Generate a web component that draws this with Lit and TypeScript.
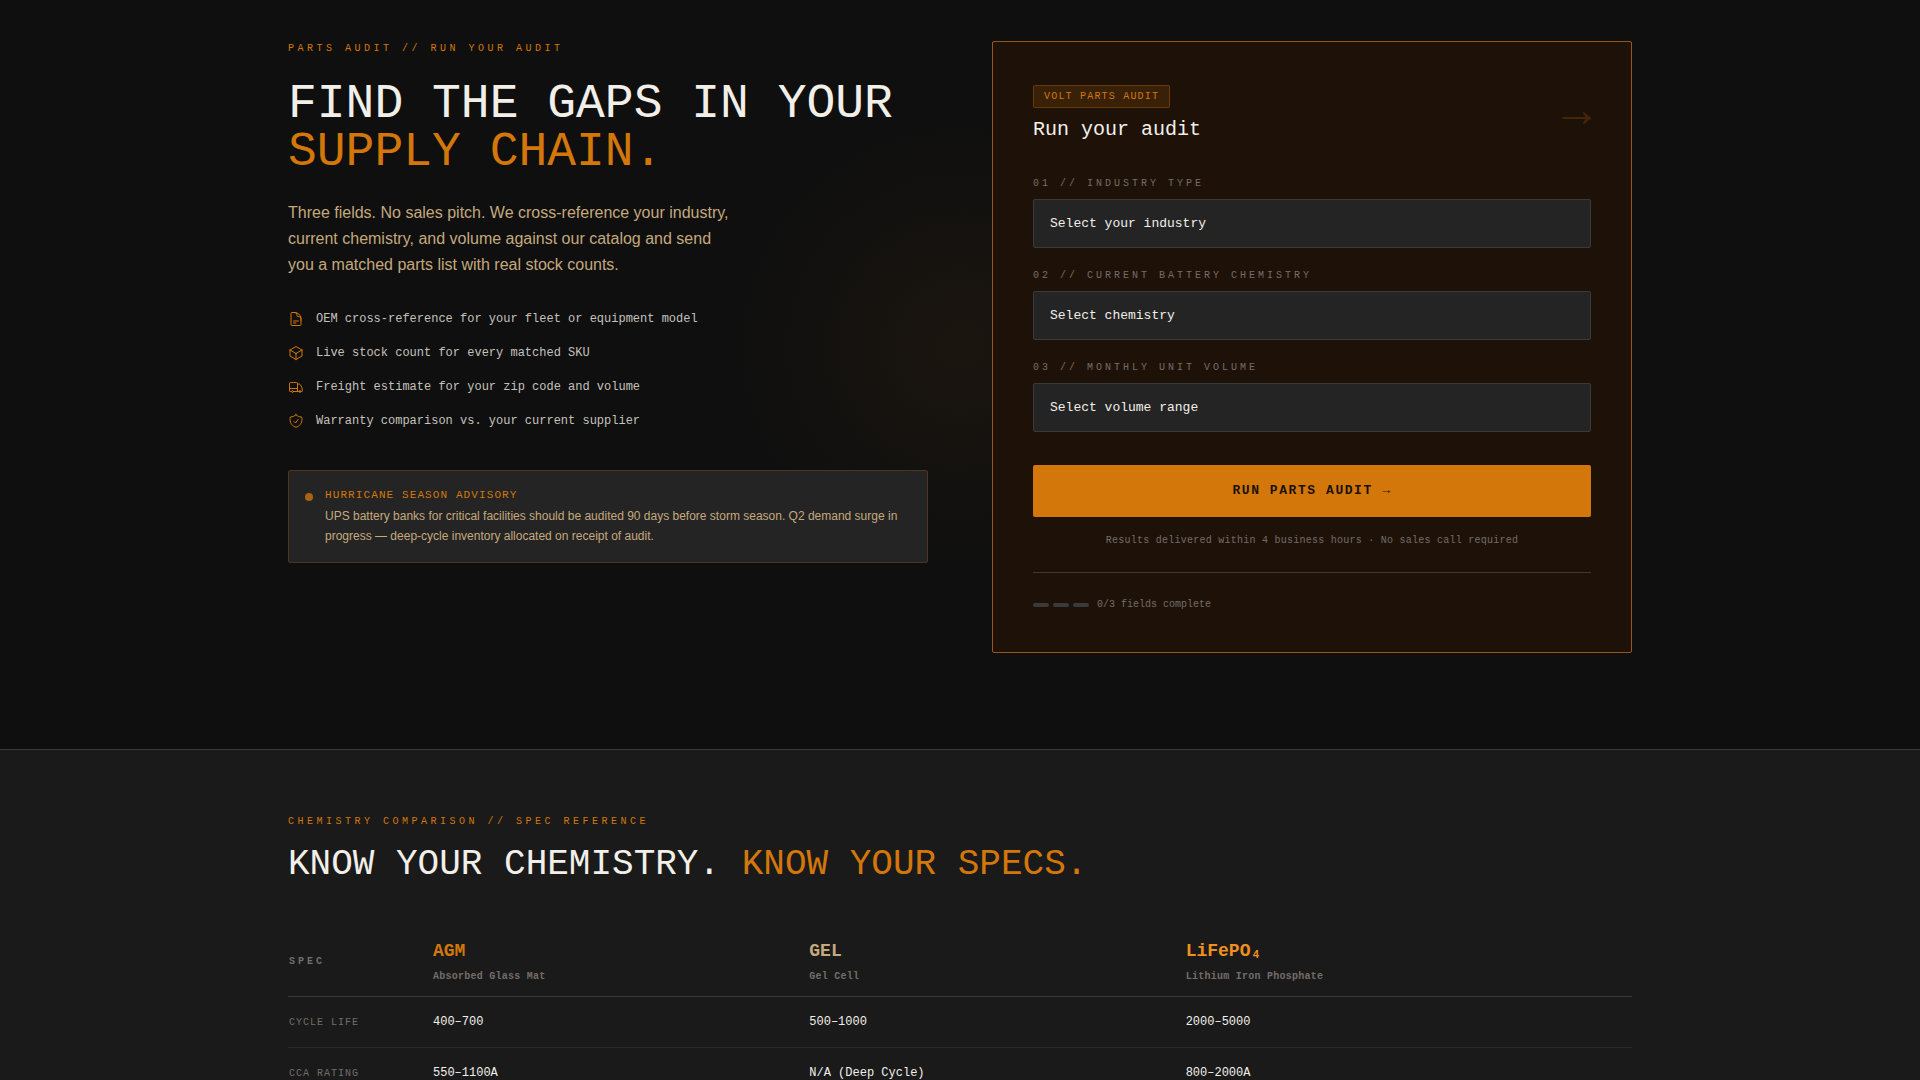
import { LitElement, html, css, svg } from "lit";
import { customElement, state } from "lit/decorators.js";

const ICONS = {
  document:
    "M19.5 14.25v-2.625a3.375 3.375 0 0 0-3.375-3.375h-1.5A1.125 1.125 0 0 1 13.5 7.125v-1.5a3.375 3.375 0 0 0-3.375-3.375H8.25m0 12.75h7.5m-7.5 3H12M10.5 2.25H5.625c-.621 0-1.125.504-1.125 1.125v17.25c0 .621.504 1.125 1.125 1.125h12.75c.621 0 1.125-.504 1.125-1.125V11.25a9 9 0 0 0-9-9Z",
  cube:
    "m21 7.5-9-5.25L3 7.5m18 0-9 5.25m9-5.25v9l-9 5.25M3 7.5l9 5.25M3 7.5v9l9 5.25m0-9v9",
  truck:
    "M8.25 18.75a1.5 1.5 0 0 1-3 0m3 0a1.5 1.5 0 0 0-3 0m3 0h6m-9 0H3.375a1.125 1.125 0 0 1-1.125-1.125V14.25m17.25 4.5a1.5 1.5 0 0 1-3 0m3 0a1.5 1.5 0 0 0-3 0m3 0h1.125c.621 0 1.129-.504 1.09-1.124a17.902 17.902 0 0 0-3.213-9.193 2.056 2.056 0 0 0-1.58-.86H14.25M16.5 18.75h-2.25m0-11.177v-.958c0-.568-.422-1.048-.987-1.106a48.554 48.554 0 0 0-10.026 0 1.106 1.106 0 0 0-.987 1.106v7.635m12-6.677v6.677m0 4.5v-4.5m0 0h-12",
  shield:
    "M9 12.75 11.25 15 15 9.75m-3-7.036A11.959 11.959 0 0 1 3.598 6 11.99 11.99 0 0 0 3 9.749c0 5.592 3.824 10.29 9 11.623 5.176-1.332 9-6.03 9-11.622 0-1.31-.21-2.571-.598-3.751h-.152c-3.196 0-6.1-1.248-8.25-3.285Z",
};

const BENEFITS: { icon: keyof typeof ICONS; text: string }[] = [
  { icon: "document", text: "OEM cross-reference for your fleet or equipment model" },
  { icon: "cube", text: "Live stock count for every matched SKU" },
  { icon: "truck", text: "Freight estimate for your zip code and volume" },
  { icon: "shield", text: "Warranty comparison vs. your current supplier" },
];

const FIELDS = [
  { id: "industry", label: "01 // INDUSTRY TYPE", prompt: "Select your industry" },
  { id: "chemistry", label: "02 // CURRENT BATTERY CHEMISTRY", prompt: "Select chemistry" },
  { id: "volume", label: "03 // MONTHLY UNIT VOLUME", prompt: "Select volume range" },
];

const CHEMISTRIES = [
  { name: "AGM", full: "Absorbed Glass Mat", tone: "amber" },
  { name: "GEL", full: "Gel Cell", tone: "sand" },
  { name: "LiFePO₄", full: "Lithium Iron Phosphate", tone: "bright" },
];

const SPECS = [
  { label: "CYCLE LIFE", values: ["400–700", "500–1000", "2000–5000"] },
  { label: "CCA RATING", values: ["550–1100A", "N/A (Deep Cycle)", "800–2000A"] },
];

@customElement("app-root")
export class AppRoot extends LitElement {
  @state() private answers: Record<string, string> = {};

  static styles = css`
    :host {
      --amber: #d4770a;
      --sand: #c4a97d;
      --ink: #0f0f0f;
      --panel: #242424;
      --line: #3a3a3a;
      --muted: #746d67;
      --light: #f2efe9;
      --mono: "Liberation Mono", monospace;
      --sans: "Liberation Sans", Arial, sans-serif;
      display: block;
      height: 100vh;
      overflow-y: auto;
      scrollbar-width: none;
      background: #1a1a1a;
      color: var(--light);
      font: 16px/24px var(--sans);
    }
    *, *::before, *::after { box-sizing: border-box; }
    h1, h2, h3, p, ul { margin: 0; padding: 0; font-weight: 400; }

    .hero {
      background:
        radial-gradient(circle at 50% calc(50% - 28px), rgba(212, 119, 10, 0.06), transparent 225px),
        var(--ink);
      padding: 41px 48px 96px;
    }
    .wrap { max-width: 1344px; margin: 0 auto; }
    .columns { display: grid; grid-template-columns: 1fr 1fr; gap: 64px; align-items: start; }

    .eyebrow {
      font: 10px/15px var(--mono);
      letter-spacing: 0.35em;
      color: var(--amber);
    }
    .accent { color: var(--amber); }
    .title { margin-top: 24px; font: 48px/48px var(--mono); }
    .title .accent { display: block; }
    .lead { max-width: 448px; margin-top: 24px; line-height: 26px; color: var(--sand); }

    .benefits { display: grid; gap: 16px; margin-top: 32px; list-style: none; }
    .benefit {
      display: flex; align-items: center; gap: 12px;
      font: 12px/18px var(--mono); color: #c5c2bd;
    }
    .icon {
      width: 16px; height: 16px; flex: none; fill: none;
      stroke: var(--amber); stroke-width: 1.5;
      stroke-linecap: round; stroke-linejoin: round;
    }

    .advisory {
      display: flex; align-items: flex-start; gap: 12px;
      margin-top: 40px; padding: 16px;
      background: var(--panel);
      border: 1px solid #4d3520;
      border-radius: 2px;
    }
    .dot {
      flex: none; width: 8px; height: 8px; margin-top: 6px;
      border-radius: 50%; background: var(--amber); opacity: 0.75;
    }
    .advisory-title { font: 11px/17px var(--mono); letter-spacing: 0.1em; color: var(--amber); }
    .advisory-text { margin-top: 2px; font-size: 12px; line-height: 20px; color: var(--sand); }

    .card {
      padding: 40px;
      background: #1e1208;
      border: 1px solid #96581a;
      border-radius: 2px;
    }
    .card-head { display: flex; justify-content: space-between; align-items: center; }
    .badge {
      display: inline-block; margin-bottom: 8px; padding: 3px 10px;
      font: 10px/15px var(--mono); letter-spacing: 0.12em; color: var(--amber);
      background: rgba(212, 119, 10, 0.15);
      border: 1px solid rgba(212, 119, 10, 0.3);
      border-radius: 2px;
    }
    .card-title { font: 20px/28px var(--mono); }
    .card-arrow { font: 48px/48px var(--mono); color: var(--amber); opacity: 0.2; }

    .fields { display: grid; gap: 20px; margin-top: 32px; }
    .field { display: grid; gap: 8px; }
    .label { font: 10px/15px var(--mono); letter-spacing: 0.3em; color: var(--muted); }
    .select {
      appearance: none; width: 100%; height: 49px; margin: 0; padding: 0 16px;
      font: 13px/20px var(--mono); color: var(--light);
      background: var(--panel);
      border: 1px solid var(--line); border-radius: 2px;
    }
    .submit {
      width: 100%; height: 52px; margin: 33px 0 0; padding: 0;
      font: 700 13px/20px var(--mono); letter-spacing: 0.12em; color: #1a1208;
      background: var(--amber); border: 0; border-radius: 2px; cursor: pointer;
    }
    .note {
      margin-top: 16px; text-align: center;
      font: 10px/15px var(--mono); letter-spacing: 0.025em; color: var(--muted);
    }
    .progress {
      display: flex; align-items: center; gap: 8px;
      margin-top: 24px; padding-top: 24px; border-top: 1px solid var(--line);
      font: 10px/15px var(--mono); color: var(--muted);
    }
    .steps { display: flex; gap: 4px; }
    .step { width: 16px; height: 4px; border-radius: 2px; background: var(--line); }
    .step.done { background: var(--amber); }

    .specs { padding: 64px 48px; border-top: 1px solid var(--line); background: #1a1a1a; }
    .subtitle { margin-top: 16px; font: 36px/40px var(--mono); }
    .table { width: 100%; margin-top: 41px; border-collapse: collapse; table-layout: fixed; }
    .col-spec { width: 144px; }
    .col-chem { width: 28%; }
    .table th, .table td { padding: 16px 1px; text-align: left; vertical-align: middle; }
    .table thead th { padding: 12px 1px; border-bottom: 1px solid var(--line); }
    .table tbody tr { border-bottom: 1px solid #282828; }
    .corner { font: 700 10px/15px var(--mono); letter-spacing: 0.3em; color: var(--muted); }
    .chem { display: block; font: 700 18px/27px var(--mono); }
    .chem.amber { color: var(--amber); }
    .chem.sand { color: var(--sand); }
    .chem.bright { color: #f0901e; }
    .chem-full {
      display: block; margin-top: 4px;
      font: 700 10px/15px var(--mono); letter-spacing: 0.025em; color: var(--muted);
    }
    .table .spec { font: 10px/15px var(--mono); letter-spacing: 0.1em; color: var(--muted); }
    .value { font: 12px/18px var(--mono); color: var(--light); }

    @media (max-width: 900px) {
      .columns { grid-template-columns: 1fr; }
    }
  `;

  private pick(id: string, event: Event) {
    const value = (event.target as HTMLSelectElement).value;
    this.answers = { ...this.answers, [id]: value };
  }

  private renderHero() {
    return html`
      <section class="hero">
        <div class="wrap columns">
          <div>
            <p class="eyebrow">PARTS AUDIT // RUN YOUR AUDIT</p>
            <h1 class="title">FIND THE GAPS IN YOUR <span class="accent">SUPPLY CHAIN.</span></h1>
            <p class="lead">
              Three fields. No sales pitch. We cross-reference your industry, current chemistry,
              and volume against our catalog and send you a matched parts list with real stock
              counts.
            </p>
            <ul class="benefits">
              ${BENEFITS.map(
                (b) => html`<li class="benefit">
                  <svg class="icon" viewBox="0 0 24 24" aria-hidden="true">
                    ${svg`<path d=${ICONS[b.icon]}></path>`}
                  </svg>
                  <span>${b.text}</span>
                </li>`
              )}
            </ul>
            <div class="advisory">
              <span class="dot"></span>
              <div>
                <p class="advisory-title">HURRICANE SEASON ADVISORY</p>
                <p class="advisory-text">
                  UPS battery banks for critical facilities should be audited 90 days before storm
                  season. Q2 demand surge in progress — deep-cycle inventory allocated on receipt
                  of audit.
                </p>
              </div>
            </div>
          </div>
          ${this.renderForm()}
        </div>
      </section>
    `;
  }

  private renderForm() {
    const done = FIELDS.filter((f) => this.answers[f.id]).length;
    return html`
      <form class="card" @submit=${(e: Event) => e.preventDefault()}>
        <div class="card-head">
          <div>
            <span class="badge">VOLT PARTS AUDIT</span>
            <h3 class="card-title">Run your audit</h3>
          </div>
          <span class="card-arrow" aria-hidden="true">→</span>
        </div>
        <div class="fields">
          ${FIELDS.map(
            (f) => html`<div class="field">
              <label class="label" for=${f.id}>${f.label}</label>
              <select class="select" id=${f.id} @change=${(e: Event) => this.pick(f.id, e)}>
                <option value="">${f.prompt}</option>
              </select>
            </div>`
          )}
        </div>
        <button class="submit" type="submit">RUN PARTS AUDIT →</button>
        <p class="note">Results delivered within 4 business hours · No sales call required</p>
        <div class="progress">
          <div class="steps">
            ${FIELDS.map((_, i) => html`<span class="step ${i < done ? "done" : ""}"></span>`)}
          </div>
          <span>${done}/${FIELDS.length} fields complete</span>
        </div>
      </form>
    `;
  }

  private renderSpecs() {
    return html`
      <section class="specs">
        <div class="wrap">
          <p class="eyebrow">CHEMISTRY COMPARISON // SPEC REFERENCE</p>
          <h2 class="subtitle">KNOW YOUR CHEMISTRY. <span class="accent">KNOW YOUR SPECS.</span></h2>
          <table class="table">
            <colgroup>
              <col class="col-spec" />
              <col class="col-chem" />
              <col class="col-chem" />
              <col />
            </colgroup>
            <thead>
              <tr>
                <th class="corner" scope="col">SPEC</th>
                ${CHEMISTRIES.map(
                  (c) => html`<th scope="col">
                    <span class="chem ${c.tone}">${c.name}</span>
                    <span class="chem-full">${c.full}</span>
                  </th>`
                )}
              </tr>
            </thead>
            <tbody>
              ${SPECS.map(
                (s) => html`<tr>
                  <th class="spec" scope="row">${s.label}</th>
                  ${s.values.map((v) => html`<td class="value">${v}</td>`)}
                </tr>`
              )}
            </tbody>
          </table>
        </div>
      </section>
    `;
  }

  render() {
    return html`${this.renderHero()}${this.renderSpecs()}`;
  }
}
